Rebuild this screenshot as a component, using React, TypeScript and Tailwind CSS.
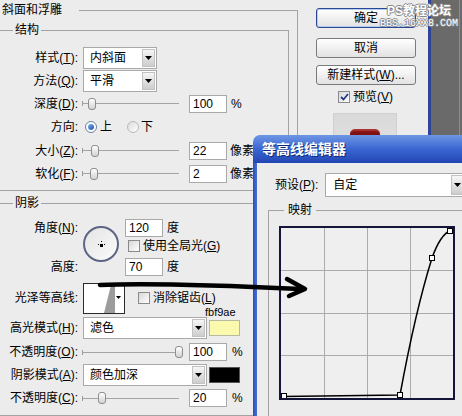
import React from "react";

function U({ c }: { c: string }) {
  return <span className="underline underline-offset-[1px]">{c}</span>;
}

function Label({ children }: { children: React.ReactNode }) {
  return <div className="w-[78px] shrink-0 text-right leading-[14px] whitespace-nowrap">{children}</div>;
}

function Tri() {
  return (
    <svg width="7" height="4" viewBox="0 0 7 4">
      <polygon points="0,0 7,0 3.5,4" fill="#000" />
    </svg>
  );
}

function DropBtn() {
  return (
    <div className="m-px flex w-[13px] shrink-0 items-center justify-center border border-[#c2c2c2] bg-linear-to-b from-[#f6f6f6] to-[#cdcdcd]">
      <Tri />
    </div>
  );
}

function Select({ text, wide }: { text: string; wide?: boolean }) {
  return (
    <div
      className={
        wide
          ? "flex h-[22px] w-[124px] border border-[#a9a9a9] bg-white"
          : "flex h-[22px] w-[74px] border border-[#a9a9a9] bg-white"
      }
    >
      <div className="flex flex-1 items-center pl-[6px] leading-[14px]">{text}</div>
      <DropBtn />
    </div>
  );
}

function Input({ v }: { v: string }) {
  return (
    <div className="flex h-[18px] w-[38px] shrink-0 items-center border border-[#a9a9a9] bg-white pl-[3px] leading-[14px]">
      {v}
    </div>
  );
}

function Thumb() {
  return <div className="h-[12px] w-[8px] shrink-0 rounded-[3px] border border-[#8e8e8e] bg-linear-to-b from-white to-[#d2d2d2]" />;
}

function Slider({ left }: { left: number }) {
  return (
    <div className="flex h-[14px] w-[107px] shrink-0 items-center pl-[4px] pr-[6px]">
      <div className="flex h-[14px] flex-1 items-center">
        <div className="h-[5px] w-px shrink-0 bg-[#9a9a9a]" />
        <div className="h-px shrink-0 bg-[#a3a3a3]" style={{ width: left - 1 }} />
        <Thumb />
        <div className="h-px flex-1 bg-[#a3a3a3]" />
      </div>
    </div>
  );
}

function Check({ checked }: { checked?: boolean }) {
  return (
    <div className="flex h-[12px] w-[12px] shrink-0 items-center justify-center border border-[#8a8a8a] bg-linear-to-br from-[#d8d8d8] to-white">
      {checked && (
        <svg width="9" height="8" viewBox="0 0 9 8">
          <path d="M1 4 L3.5 6.5 L8 1" stroke="#21398a" strokeWidth="1.8" fill="none" />
        </svg>
      )}
    </div>
  );
}

function Radio({ on }: { on?: boolean }) {
  return on ? (
    <div className="flex h-[12px] w-[12px] shrink-0 items-center justify-center rounded-full border border-[#6d7f9c] bg-white">
      <div className="h-[6px] w-[6px] rounded-full bg-linear-to-br from-[#7fb0ee] to-[#1e4fb0]" />
    </div>
  ) : (
    <div className="h-[12px] w-[12px] shrink-0 rounded-full border border-[#b9b9b9] bg-linear-to-br from-[#dcdcdc] to-white" />
  );
}

export default function App() {
  return (
    <div className="relative flex h-[416px] w-[462px] overflow-hidden bg-[#ececec] text-[12px] text-black font-['Liberation_Sans','Noto_Sans_CJK_SC',sans-serif]">
      {/* Left panel */}
      <div className="w-[298px] shrink-0">
        <div className="mt-[10px] h-[420px] w-[298px] border-t border-r border-[#a3a3a3]">
          <div className="-mt-[11px] flex h-[20px] items-center">
            <span className="bg-[#ececec] pl-[2px] pr-[17px] leading-[14px]">斜面和浮雕</span>
          </div>

          {/* 结构 */}
          <div className="mt-[10px] w-[289px] border-t border-r border-b border-[#a3a3a3] pb-[5px]">
            <div className="-mt-[11px] flex h-[20px] items-center">
              <span className="ml-[13px] bg-[#ececec] px-[2px] leading-[14px]">结构</span>
            </div>
            <div className="mt-[6px] flex h-[23px] items-center">
              <Label>
                样式(<U c="T" />):
              </Label>
              <div className="ml-[5px]">
                <Select text="内斜面" />
              </div>
            </div>
            <div className="flex h-[23px] items-center">
              <Label>
                方法(<U c="Q" />):
              </Label>
              <div className="ml-[5px]">
                <Select text="平滑" />
              </div>
            </div>
            <div className="flex h-[23px] items-center">
              <Label>
                深度(<U c="D" />):
              </Label>
              <div className="ml-[0px]">
                <Slider left={6} />
              </div>
              <div className="ml-[4px]">
                <Input v="100" />
              </div>
              <span className="ml-[4px] leading-[14px]">%</span>
            </div>
            <div className="flex h-[24px] items-center">
              <Label>方向:</Label>
              <div className="ml-[7px]">
                <Radio on />
              </div>
              <span className="ml-[3px] leading-[14px]">上</span>
              <div className="ml-[15px]">
                <Radio />
              </div>
              <span className="ml-[2px] leading-[14px]">下</span>
            </div>
            <div className="flex h-[23px] items-center">
              <Label>
                大小(<U c="Z" />):
              </Label>
              <Slider left={9} />
              <div className="ml-[4px]">
                <Input v="22" />
              </div>
              <span className="ml-[3px] leading-[14px] whitespace-nowrap">像素</span>
            </div>
            <div className="flex h-[23px] items-center">
              <Label>
                软化(<U c="F" />):
              </Label>
              <Slider left={8} />
              <div className="ml-[4px]">
                <Input v="2" />
              </div>
              <span className="ml-[3px] leading-[14px] whitespace-nowrap">像素</span>
            </div>
          </div>

          {/* 阴影 */}
          <div className="mt-[12px] w-[289px] border-t border-r border-b border-[#a3a3a3] pb-[6px]">
            <div className="-mt-[11px] flex h-[20px] items-center">
              <span className="ml-[13px] bg-[#ececec] px-[2px] leading-[14px]">阴影</span>
            </div>
            <div className="mt-[3px] flex h-[66px]">
              <div className="flex w-[80px] shrink-0 flex-col">
                <div className="flex h-[24px] items-center">
                  <Label>
                    角度(<U c="N" />):
                  </Label>
                </div>
                <div className="h-[12px]" />
                <div className="flex h-[30px] items-center">
                  <Label>高度:</Label>
                </div>
              </div>
              <div className="ml-[3px] mt-[10px] flex h-[36px] w-[36px] shrink-0 items-center justify-center rounded-full border-2 border-[#5d6584] bg-linear-to-br from-[#e4e4e4] to-[#fbfbfb]">
                <svg width="7" height="7" viewBox="0 0 7 7">
                  <rect x="3" y="0" width="1" height="1" fill="#000" />
                  <rect x="0" y="3" width="1" height="1" fill="#000" />
                  <rect x="6" y="3" width="1" height="1" fill="#000" />
                  <rect x="2" y="3" width="3" height="3" fill="#000" />
                </svg>
              </div>
              <div className="ml-[6px] flex flex-col">
                <div className="flex h-[24px] items-center">
                  <Input v="120" />
                  <span className="ml-[4px] leading-[14px]">度</span>
                </div>
                <div className="flex h-[12px] items-center">
                  <div className="ml-[3px]">
                    <Check />
                  </div>
                  <span className="ml-[3px] leading-[14px] whitespace-nowrap">
                    使用全局光(<U c="G" />)
                  </span>
                </div>
                <div className="flex h-[30px] items-center">
                  <Input v="70" />
                  <span className="ml-[4px] leading-[14px]">度</span>
                </div>
              </div>
            </div>

            <div className="flex h-[32px] items-center">
              <Label>光泽等高线:</Label>
              <div className="ml-[5px] h-[31px] w-[42px] shrink-0 border border-[#2a2a2a] bg-white">
                <svg width="40" height="29" viewBox="0 0 40 29">
                  <polygon points="20,29 31,29 31,1 27,1" fill="#9c9c9c" />
                  <polygon points="32,12 37,12 34.5,15" fill="#000" />
                </svg>
              </div>
              <div className="ml-[13px]">
                <Check />
              </div>
              <span className="ml-[3px] leading-[14px] whitespace-nowrap">
                消除锯齿(<U c="L" />)
              </span>
            </div>

            <div className="mt-[3px] flex h-[22px] items-center">
              <Label>
                高光模式(<U c="H" />):
              </Label>
              <div className="ml-[5px]">
                <Select text="滤色" wide />
              </div>
              <div className="relative ml-[2px] h-[16px] w-[31px] border border-[#b9b9a0] bg-[#fbf9ae]">
                <span className="absolute bottom-[17px] left-[-5px] text-[11px] leading-[12px]">fbf9ae</span>
              </div>
            </div>
            <div className="mt-[2px] flex h-[22px] items-center">
              <Label>
                不透明度(<U c="O" />):
              </Label>
              <Slider left={93} />
              <div className="ml-[4px]">
                <Input v="100" />
              </div>
              <span className="ml-[5px] leading-[14px]">%</span>
            </div>
            <div className="mt-[1px] flex h-[22px] items-center">
              <Label>
                阴影模式(<U c="A" />):
              </Label>
              <div className="ml-[5px]">
                <Select text="颜色加深" wide />
              </div>
              <div className="ml-[2px] h-[16px] w-[31px] border border-[#555] bg-black" />
            </div>
            <div className="mt-[1px] flex h-[22px] items-center">
              <Label>
                不透明度(<U c="C" />):
              </Label>
              <Slider left={16} />
              <div className="ml-[4px]">
                <Input v="20" />
              </div>
              <span className="ml-[5px] leading-[14px]">%</span>
            </div>
          </div>
        </div>
      </div>

      {/* Right column */}
      <div className="w-[130px] shrink-0">
        <div className="ml-[18px] mt-[8px] flex w-[100px] flex-col">
          <div className="flex h-[20px] w-[100px] items-center justify-center rounded-[3px] border border-[#2b4794] bg-linear-to-b from-white to-[#e2e2e2] leading-[14px] shadow-[inset_0_0_0_1px_#b3cdf0]">
            确定
          </div>
          <div className="mt-[10px] flex h-[20px] w-[100px] items-center justify-center rounded-[3px] border border-[#7a7a7a] bg-linear-to-b from-white to-[#e2e2e2] leading-[14px]">
            取消
          </div>
          <div className="mt-[7px] flex h-[20px] w-[100px] items-center justify-center rounded-[3px] border border-[#7a7a7a] bg-linear-to-b from-white to-[#e2e2e2] leading-[14px] whitespace-nowrap">
            新建样式(<U c="W" />)...
          </div>
        </div>
        <div className="ml-[40px] mt-[6px] flex h-[12px] items-center">
          <Check checked />
          <span className="ml-[3px] leading-[14px] whitespace-nowrap">
            预览(<U c="V" />)
          </span>
        </div>
        <div className="ml-[35px] mt-[10px] h-[80px] w-[64px] border border-[#d0d0d0] bg-linear-to-b from-[#d9d9d9] to-[#ececec] pl-[16px] pt-[15px]">
          <div className="h-[14px] w-[30px] rounded-t-[5px] border-t-2 border-[#a83232] bg-linear-to-b from-[#8a1414] to-[#5e0808]" />
        </div>
      </div>

      {/* Dialog edge and workspace */}
      <div className="w-[3px] shrink-0 bg-[#2f4497]" />
      <div className="flex flex-1 justify-end bg-[#6a6a6a]">
        <div className="mr-[2px] w-px bg-[#8c8c8c]" />
      </div>

      {/* Watermark */}
      <div className="pointer-events-none absolute left-[378px] top-[4px] flex w-[82px] flex-col items-center text-white">
        <span className="text-[12px] leading-[15px] font-bold [text-shadow:1px_0_#8a8a8a,-1px_0_#8a8a8a,0_1px_#8a8a8a,0_-1px_#8a8a8a]">
          PS教程论坛
        </span>
        <span className="font-['Liberation_Mono',monospace] text-[10px] leading-[10px] [text-shadow:1px_0_#8a8a8a,-1px_0_#8a8a8a,0_1px_#8a8a8a,0_-1px_#8a8a8a]">
          BBS.16XX8.COM
        </span>
      </div>

      {/* Contour editor window */}
      <div className="absolute left-[253px] top-[135px] flex h-[290px] w-[215px] flex-col">
        <div className="flex h-[28px] shrink-0 items-center rounded-tl-[7px] bg-linear-to-b from-[#6f96e4] via-[#3b66d2] to-[#2246b4] pl-[9px]">
          <span className="text-[14px] leading-[16px] font-bold text-white whitespace-nowrap [text-shadow:1px_1px_#0c2a78]">
            等高线编辑器
          </span>
        </div>
        <div className="flex flex-1">
          <div className="w-[4px] shrink-0 bg-linear-to-r from-[#2a4fb8] to-[#4870d6]" />
          <div className="flex-1 bg-[#ececec]">
            <div className="mt-[10px] flex h-[24px] items-center pl-[18px]">
              <span className="leading-[14px] whitespace-nowrap">
                预设(<U c="P" />):
              </span>
              <div className="ml-[7px] flex h-[24px] w-[141px] shrink-0 border border-[#a9a9a9] bg-white">
                <div className="flex flex-1 items-center pl-[7px] leading-[14px]">自定</div>
                <DropBtn />
              </div>
            </div>
            <div className="ml-[11px] mt-[13px] h-[220px] w-[220px] border-t border-l border-[#a3a3a3]">
              <div className="-mt-[11px] flex h-[20px] items-center">
                <span className="ml-[15px] bg-[#ececec] px-[4px] leading-[14px]">映射</span>
              </div>
              <div className="ml-[10px] mt-[6px] h-[174px] w-[176px] border-2 border-[#15153a] bg-[#efefef]">
                <svg width="172" height="170" viewBox="0 0 172 170">
                  <g stroke="#ababab" strokeWidth="1">
                    <line x1="43.5" y1="0" x2="43.5" y2="170" />
                    <line x1="86.5" y1="0" x2="86.5" y2="170" />
                    <line x1="129.5" y1="0" x2="129.5" y2="170" />
                    <line x1="0" y1="42.5" x2="172" y2="42.5" />
                    <line x1="0" y1="85.5" x2="172" y2="85.5" />
                    <line x1="0" y1="127.5" x2="172" y2="127.5" />
                  </g>
                  <path
                    d="M2 168.5 L119 167 C 128 118, 141 62, 151 30 C 157 13, 163 5, 170 2"
                    stroke="#000"
                    strokeWidth="1.5"
                    fill="none"
                  />
                  <g fill="#fff" stroke="#000" strokeWidth="1">
                    <rect x="0.5" y="165.5" width="5" height="5" />
                    <rect x="116.5" y="164.5" width="5" height="5" />
                    <rect x="148.5" y="27.5" width="5" height="5" />
                    <rect x="166.5" y="0.5" width="5" height="5" />
                  </g>
                </svg>
              </div>
            </div>
          </div>
        </div>
      </div>

      {/* Hand-drawn arrow */}
      <svg
        className="pointer-events-none absolute left-[95px] top-[274px]"
        width="216"
        height="26"
        viewBox="0 0 216 26"
      >
        <path d="M5 11 C 50 9, 120 11, 206 15" stroke="#000" strokeWidth="4.5" strokeLinecap="round" fill="none" />
        <path d="M192 5 L210 15 L194 22" stroke="#000" strokeWidth="4.5" strokeLinecap="round" strokeLinejoin="round" fill="none" />
      </svg>
    </div>
  );
}
